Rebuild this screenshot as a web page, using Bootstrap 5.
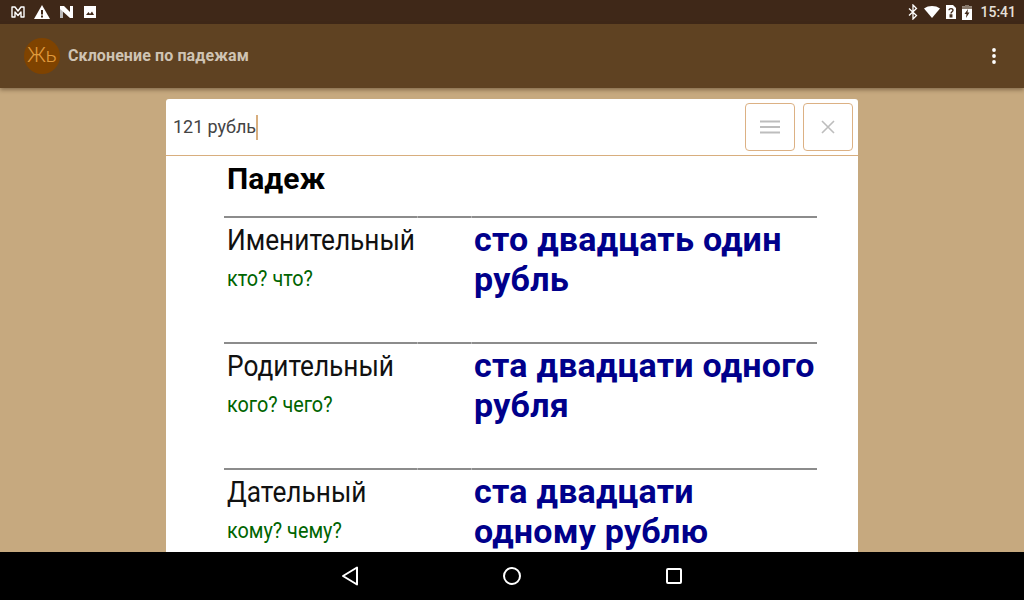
<!DOCTYPE html>
<html lang="ru">
<head>
<meta charset="UTF-8">
<meta name="viewport" content="width=device-width, initial-scale=1.0">
<title>Склонение по падежам</title>
<link href="https://cdn.jsdelivr.net/npm/bootstrap@5.3.0/dist/css/bootstrap.min.css" rel="stylesheet">
<style>
html, body { height: 600px; overflow: hidden; }
body { font-family: Roboto, sans-serif; background: #c6a97f; }
.screen { height: 600px; }
.status-bar { height: 24px; background: #3f2818; color: #e6e0da; font-size: 14px; font-weight: 500; padding: 0 8px 0 11px; }
.status-left { gap: 9px; }
.status-right { gap: 6px; }
.status-time { margin-left: 2px; }
.app-bar { height: 64px; background: #5f4222; padding: 0 28px 0 24px; box-shadow: 0 2px 4px rgba(60, 40, 20, .45); z-index: 1; }
.app-logo { width: 36px; height: 36px; background: #7f4300; color: #e09a3c; font-size: 21px; font-weight: 300; }
.app-title { font-size: 16px; letter-spacing: .1px; font-weight: 700; color: #cfc4b4; margin-left: 8px; }
.main-area { min-height: 0; }
.sheet { width: 692px; margin-top: 11px; background: #fff; border-radius: 3px 3px 0 0; }
.search-row { height: 57px; border-bottom: 1px solid #d8ae7e; padding: 0 5px 0 7px; }
.search-text { font-size: 18px; letter-spacing: -.05px; color: #444; margin-bottom: 2px; }
.caret-mark { width: 2px; height: 25px; background: #d8ae7e; }
.square-btn { width: 50px; height: 48px; padding: 0; border: 1px solid #dcb184; border-radius: 4px; background: #fff; }
.decl-wrap { padding: 0 41px 0 58px; }
.decl-head { height: 60px; padding: 7px 0 0 3px; font-size: 30px; font-weight: 700; color: #000; line-height: 32px; }
.decl-row { height: 126px; }
.rule-line { height: 2px; gap: 1px; background: #b4b4b4; }
.rule-line div { background: #8c8c8c; }
.rule-a { width: 193px; }
.rule-b { width: 53px; }
.rule-c { flex: 1; }
.case-col { width: 247px; padding: 4px 0 0 3px; }
.case-name, .case-ask { display: inline-block; transform-origin: left center; white-space: nowrap; }
.case-name { font-size: 29px; line-height: 36px; color: #111; transform: scaleX(.905); }
.case-ask { display: block; font-size: 22px; line-height: 28px; margin-top: 7px; color: #006400; transform: scaleX(.9); }
.case-value { padding: 1px 0 0 3px; font-size: 34px; letter-spacing: .25px; line-height: 40px; font-weight: 700; color: #00008b; }
.nav-keys { height: 48px; background: #000; z-index: 1; }
</style>
</head>
<body>
<div class="screen d-flex flex-column">
  <div class="status-bar d-flex align-items-center justify-content-between flex-shrink-0">
    <div class="status-left d-flex align-items-center">
      <svg width="14" height="14" viewBox="0 0 14 14"><path d="M1 2h3l3 4 3-4h3v10h-3V7L7 10.500 4 7v5H1z" fill="none" stroke="#fff" stroke-width="1.400" stroke-linejoin="round"/></svg>
      <svg width="16" height="14" viewBox="0 0 16 14"><path d="M8 0 16 14H0z" fill="#fff"/><path d="M7 5h2v4.500H7zM7 10.500h2V12.500H7z" fill="#3f2818"/></svg>
      <svg width="15" height="14" viewBox="0 0 15 14"><path d="M1 1h3v12H1z" fill="#bbb"/><path d="M11 1h3v12h-3z" fill="#fff"/><path d="M1 1h4l9 9v3h-3L1 4z" fill="#fff"/></svg>
      <svg width="14" height="14" viewBox="0 0 14 14"><path d="M1 1h12v12H1z" fill="#fff"/><path d="M3 10l2.500-3 1.500 2 2-2.500L11 10z" fill="#3f2818"/></svg>
    </div>
    <div class="status-right d-flex align-items-center">
      <svg width="10" height="16" viewBox="0 0 10 16"><path d="M1 4.500 8.500 11.500 5 15V1l3.500 3.500L1 11.500" fill="none" stroke="#fff" stroke-width="1.300"/></svg>
      <svg width="16" height="12" viewBox="0 0 16 12"><path d="M0 2.500C4.500-.8 11.500-.8 16 2.500L8 12z" fill="#fff"/></svg>
      <svg width="10" height="14" viewBox="0 0 10 14"><path d="M0 0h7l3 3v11H0z" fill="#fff"/><path d="M3 5.200C3 3 7 3 7 5.200 7 6.800 5 6.800 5 8.500M4.200 10h1.600v1.800H4.200z" fill="none" stroke="#3f2818" stroke-width="1.300"/></svg>
      <svg width="10" height="15" viewBox="0 0 10 15"><path d="M3 0h4v1.500h3V15H0V1.500h3z" fill="#fff"/><path d="M3 0h4v1.500h3V4H0V1.500h3z" fill="#8a7a6c"/><path d="M6 4 2.500 9h2L4 13l3.500-5.500h-2z" fill="#3f2818"/></svg>
      <span class="status-time">15:41</span>
    </div>
  </div>

  <div class="app-bar d-flex align-items-center flex-shrink-0">
    <div class="app-logo rounded-circle d-flex align-items-center justify-content-center">Жь</div>
    <div class="app-title flex-grow-1">Склонение по падежам</div>
    <svg width="4" height="16" viewBox="0 0 4 16"><circle cx="2" cy="2" r="1.900" fill="#fff"/><circle cx="2" cy="8" r="1.900" fill="#fff"/><circle cx="2" cy="14" r="1.900" fill="#fff"/></svg>
  </div>

  <div class="main-area flex-grow-1 d-flex justify-content-center overflow-hidden">
    <div class="sheet">
      <div class="search-row d-flex align-items-center">
        <span class="search-text">121 рубль</span><span class="caret-mark"></span>
        <div class="ms-auto d-flex gap-2">
          <button class="square-btn d-flex align-items-center justify-content-center" type="button">
            <svg width="20" height="14" viewBox="0 0 20 14"><path d="M0 1.500h20M0 7h20M0 12.500h20" stroke="#bdbdbd" stroke-width="2"/></svg>
          </button>
          <button class="square-btn d-flex align-items-center justify-content-center" type="button">
            <svg width="14" height="14" viewBox="0 0 14 14"><path d="M1 1l12 12M13 1 1 13" stroke="#bdbdbd" stroke-width="1.600"/></svg>
          </button>
        </div>
      </div>
      <div class="decl-wrap">
        <div class="decl-head">Падеж</div>
        <div class="decl-row">
          <div class="rule-line d-flex"><div class="rule-a"></div><div class="rule-b"></div><div class="rule-c"></div></div>
          <div class="d-flex">
            <div class="case-col flex-shrink-0">
              <div class="case-name">Именительный</div>
              <div class="case-ask">кто? что?</div>
            </div>
            <div class="case-value">сто двадцать один рубль</div>
          </div>
        </div>
        <div class="decl-row">
          <div class="rule-line d-flex"><div class="rule-a"></div><div class="rule-b"></div><div class="rule-c"></div></div>
          <div class="d-flex">
            <div class="case-col flex-shrink-0">
              <div class="case-name">Родительный</div>
              <div class="case-ask">кого? чего?</div>
            </div>
            <div class="case-value">ста двадцати одного рубля</div>
          </div>
        </div>
        <div class="decl-row">
          <div class="rule-line d-flex"><div class="rule-a"></div><div class="rule-b"></div><div class="rule-c"></div></div>
          <div class="d-flex">
            <div class="case-col flex-shrink-0">
              <div class="case-name">Дательный</div>
              <div class="case-ask">кому? чему?</div>
            </div>
            <div class="case-value">ста двадцати<br>одному рублю</div>
          </div>
        </div>
      </div>
    </div>
  </div>

  <div class="nav-keys d-flex align-items-center flex-shrink-0">
    <svg width="1024" height="48" viewBox="0 0 1024 48">
      <path d="M357 15.500v17L343 24z" fill="none" stroke="#fff" stroke-width="2" stroke-linejoin="round"/>
      <circle cx="512" cy="24" r="8" fill="none" stroke="#fff" stroke-width="2"/>
      <rect x="667" y="17" width="14" height="14" rx="1" fill="none" stroke="#fff" stroke-width="2"/>
    </svg>
  </div>
</div>
</body>
</html>
